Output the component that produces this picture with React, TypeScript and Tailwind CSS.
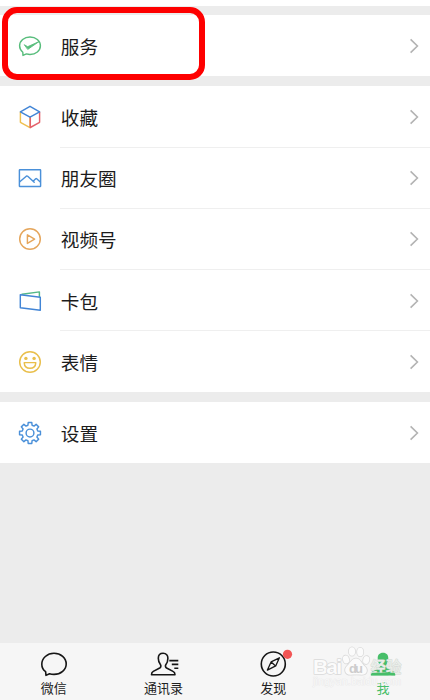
import type { ReactNode } from "react";

const gearPath = (() => {
  const points: string[] = [];
  for (let i = 0; i < 8; i++) {
    const base = (i * Math.PI) / 4;
    const corners: [number, number][] = [
      [-0.26, 8],
      [-0.17, 10.6],
      [0.17, 10.6],
      [0.26, 8],
    ];
    corners.forEach(([offset, r]) => {
      const x = 12 + r * Math.sin(base + offset);
      const y = 12 - r * Math.cos(base + offset);
      points.push(`${x.toFixed(2)} ${y.toFixed(2)}`);
    });
  }
  return `M${points.join("L")}Z`;
})();

function Icon({ children }: { children: ReactNode }) {
  return (
    <svg
      viewBox="0 0 24 24"
      className="h-6 w-6 shrink-0"
      fill="none"
      strokeWidth="1.45"
      strokeLinejoin="round"
      strokeLinecap="round"
    >
      {children}
    </svg>
  );
}

const icons = {
  service: (
    <Icon>
      <g stroke="#58bd7c">
        <path d="M4.8 18.2C2.8 16.6 1.6 14.3 1.6 11.8C1.6 6.9 6.2 2.9 12 2.9S22.4 6.9 22.4 11.8S17.8 20.4 12 20.4C10.7 20.4 9.5 20.2 8.4 19.9L5 21.4Z" />
        <path d="M6.6 10.9L9.7 12.7L21 7.6L10 15.2Z" fill="#58bd7c" strokeWidth="0.9" />
      </g>
    </Icon>
  ),
  favorites: (
    <Icon>
      <path d="M2.4 7.1V17.3L12 22.7V12.4" stroke="#efc04f" />
      <path d="M12.3 12.4V22.5L21.6 17.3V7.1" stroke="#e4616a" />
      <path d="M2.4 6.9L12 1.3L21.6 6.9L12 12.2Z" stroke="#4285d6" />
    </Icon>
  ),
  moments: (
    <Icon>
      <g stroke="#4a90d9">
        <rect x="1.4" y="3.7" width="21.2" height="16.8" rx="0.5" />
        <path d="M1.8 15.7L8.3 10.2Q9 9.7 9.7 10.3L16.2 16.3M15.1 15.2L17.7 12.8Q18.2 12.4 18.7 12.8L22.3 16" />
      </g>
    </Icon>
  ),
  channels: (
    <Icon>
      <g stroke="#e5a65c">
        <circle cx="12" cy="12" r="10.3" />
        <path d="M9.4 7.8V16.4L16.6 12.1Z" />
      </g>
    </Icon>
  ),
  cards: (
    <Icon>
      <path d="M4 5.2L21.4 2.9V7.7" stroke="#54b887" />
      <path d="M2.3 5.7L22.3 8.2V21.3L2.3 18.8Z" stroke="#4285d6" />
    </Icon>
  ),
  stickers: (
    <Icon>
      <g stroke="#e9bf4c">
        <circle cx="12" cy="12" r="10.3" />
        <path d="M6.2 12.6H17.8C17.6 16.2 15.2 18.3 12 18.3S6.4 16.2 6.2 12.6Z" />
      </g>
      <circle cx="7.9" cy="8.4" r="1.7" fill="#e9bf4c" />
      <circle cx="16.1" cy="8.4" r="1.7" fill="#e9bf4c" />
    </Icon>
  ),
  settings: (
    <Icon>
      <g stroke="#4a90d9">
        <path d={gearPath} />
        <circle cx="12" cy="12" r="3.9" />
      </g>
    </Icon>
  ),
};

const mainItems = [
  { label: "收藏", icon: icons.favorites },
  { label: "朋友圈", icon: icons.moments },
  { label: "视频号", icon: icons.channels },
  { label: "卡包", icon: icons.cards },
  { label: "表情", icon: icons.stickers },
];

function Row({ label, icon, divider }: { label: string; icon: ReactNode; divider?: boolean }) {
  return (
    <div className="flex h-[61.2px] items-center bg-white pl-[18px]">
      {icon}
      <div
        className={`ml-[18px] flex h-full flex-1 items-center justify-between border-b pt-px pr-[11px] ${
          divider ? "border-[#efefef]" : "border-transparent"
        }`}
      >
        <span className="pl-[0.8px] text-[18.6px] leading-6 text-[#1c1c1c]">{label}</span>
        <svg viewBox="0 0 10 16" className="h-4 w-2.5" fill="none" stroke="#b3b3b3" strokeWidth="1.6">
          <path d="M1.6 1.4L8.4 8L1.6 14.6" />
        </svg>
      </div>
    </div>
  );
}

function Tab({ label, active, children }: { label: string; active?: boolean; children: ReactNode }) {
  return (
    <div className="flex w-[109.7px] shrink-0 flex-col items-center">
      <svg
        viewBox="0 0 32 30"
        className="h-[30px] w-8 overflow-visible"
        fill="none"
        stroke="#161616"
        strokeWidth="1.6"
        strokeLinejoin="round"
      >
        {children}
      </svg>
      <span className={`text-[13px] leading-[18px] ${active ? "text-[#47be69]" : "text-[#222]"}`}>
        {label}
      </span>
    </div>
  );
}

function Watermark() {
  return (
    <svg
      viewBox="0 0 100 48"
      className="absolute top-[3px] left-[309px] h-12 w-[100px] overflow-visible"
      fill="#fbfbfb"
      stroke="#dadada"
      strokeWidth="1.6"
      strokeLinejoin="round"
      paintOrder="stroke"
    >
      <text x="5" y="28" fontSize="21" fontWeight="700" textLength="29" fontFamily="Liberation Sans, sans-serif">
        Bai
      </text>
      <ellipse cx="38" cy="13.5" rx="3" ry="4" transform="rotate(-15 38 13.5)" />
      <ellipse cx="44" cy="5.5" rx="3.1" ry="4.3" />
      <ellipse cx="52.2" cy="6" rx="3.1" ry="4.3" />
      <ellipse cx="58.2" cy="14" rx="3" ry="4" transform="rotate(15 58.2 14)" />
      <path d="M48 12.5C52.5 12.5 53 17 57 20.5C60.5 24 59 29 53.5 28.7C50 28.4 46.5 28.4 43 28.7C37 29.2 35.5 23.5 39 20C43 16.5 43.5 12.5 48 12.5Z" />
      <text
        x="41"
        y="27"
        fontSize="13"
        fontWeight="700"
        fill="#cdcdcd"
        stroke="none"
        textLength="14"
        fontFamily="Liberation Sans, sans-serif"
      >
        du
      </text>
      <text x="62.5" y="27" fontSize="15.5" fontWeight="500" strokeWidth="0.9" stroke="#d5d9d5" fill="#e9eee9" textLength="31">
        经验
      </text>
      {/* base of the profile icon shows through the lettering */}
      <path d="M63.2 28.3C63.2 27.6 63.6 27.1 64.3 26.8H85.7C86.6 27.1 87.2 27.6 87.2 28.3V29.3H63.2Z" fill="#47be69" stroke="none" />
      <text
        x="5"
        y="39"
        fontSize="10.5"
        strokeWidth="0.7"
        stroke="#e6e6e6"
        fill="#f8f8f8"
        textLength="88"
        fontFamily="Liberation Sans, sans-serif"
      >
        jingyan.baidu.com
      </text>
    </svg>
  );
}

export default function App() {
  return (
    <div className="relative flex h-[700px] w-[430px] flex-col overflow-hidden bg-[#ececec] font-['Noto_Sans_CJK_SC',sans-serif]">
      <div className="h-1.5 shrink-0 bg-white" />

      <div className="mt-[9px]">
        <Row label="服务" icon={icons.service} />
      </div>

      <div className="mt-[10.2px]">
        {mainItems.map((item, i) => (
          <Row key={item.label} label={item.label} icon={item.icon} divider={i < mainItems.length - 1} />
        ))}
      </div>

      <div className="mt-[9.6px]">
        <Row label="设置" icon={icons.settings} />
      </div>

      {/* Bottom tab bar */}
      <div className="relative -ml-px mt-auto flex h-[57px] shrink-0 bg-[#f6f6f6] pt-1.5">
        <Tab label="微信">
          <path d="M7.6 22.7C4.9 20.7 3.8 18.2 3.8 15.2C3.8 9.2 9.2 4.3 16 4.3S28.2 9 28.2 14.9S22.8 25.4 16 25.4C14.4 25.4 12.9 25.2 11.5 24.7L8 26.4Z" />
        </Tab>
        <Tab label="通讯录">
          <path d="M15.1 4.3C11.8 4.3 10.3 6.4 10.3 9.3C10.3 12.3 11.4 14.4 12.5 15.8C13.2 16.8 12.9 18.3 11.7 19L5.3 22.4C3.8 23.2 3.5 24.2 3.5 25.7H27C27 24.2 26.6 23.2 25 22.4L18.6 19C17.4 18.3 17.1 16.8 17.8 15.8C18.9 14.4 19.9 12.3 19.9 9.3C19.9 6.4 18.4 4.3 15.1 4.3Z" />
          <path d="M21.3 11.6H30.3M23.8 15.4H30.3M26.3 19.2H30.3" />
        </Tab>
        <Tab label="发现">
          <circle cx="16.3" cy="15" r="12" />
          <path d="M22.4 8.8L18.7 16.9L10.4 21.1L14.1 12.9Z M14.5 13.3L18.3 16.7" strokeWidth="1.3" />
          <circle cx="30.5" cy="5.3" r="4.6" fill="#f25555" stroke="none" />
        </Tab>
        <Tab label="我" active>
          <path
            d="M16 3.7C12.4 3.7 10.7 6 10.7 9.2C10.7 12.4 11.7 14.4 12.7 16C13.1 17.2 12.8 18.4 11.7 19L5.2 22.4C3.9 23.2 3.8 24.8 3.8 26.6H28.2C28.2 24.8 28 23.2 26.8 22.4L20.3 19C19.2 18.4 18.9 17.2 19.3 16C20.3 14.4 21.3 12.4 21.3 9.2C21.3 6 19.6 3.7 16 3.7Z"
            fill="#47be69"
            stroke="none"
          />
        </Tab>
        <Watermark />
      </div>

      {/* Highlight around the service entry */}
      <div className="absolute top-[7px] left-0.5 h-[73px] w-[203px] rounded-[15px] border-6 border-[#fe0000]" />
    </div>
  );
}
